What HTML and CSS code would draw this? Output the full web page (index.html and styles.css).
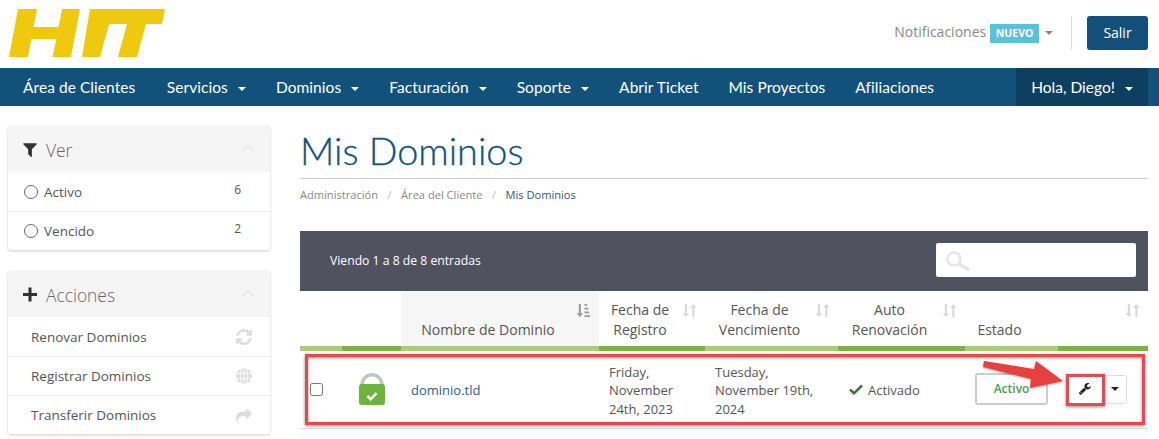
FILE: index.html
```html
<!DOCTYPE html>
<html>
  <head>
    <title>Mis Dominios</title>
    <link rel="stylesheet" href="styles.css">
  </head>
  <body>
    <svg width="0" height="0" class="defs">
      <symbol id="sort" viewBox="0 0 16 16">
        <path d="M3 1h2.200v10H7.600L4.100 15 .6 11H3zM11 15V5H8.600l3.500-4 3.500 4h-2.400v10z" />
      </symbol>
      <symbol id="sort-active" viewBox="0 0 16 16">
        <path d="M3 1h2.200v10H7.600L4.100 15 .6 11H3z" />
        <path d="M9 1h3v2H9zM9 5h4v2H9zM9 9h5v2H9zM9 13h6v2H9z" />
      </symbol>
    </svg>

    <header class="top">
      <svg class="logo" viewBox="0 0 158 48" width="158" height="48">
        <polygon fill="#eec90d" points="9,0 28,0 24.600,18 49.600,18 53,0 71,0 62,48 43.500,48 47.400,30 22.400,30 19,48 0,48" />
        <polygon fill="#eec90d" points="81,0 156,0 153,15 137,15 128,48 109,48 118,15 100,15 91,48 73,48" />
      </svg>
      <div class="top-right">
        <a class="notif">Notificaciones <span class="badge">NUEVO</span> <i class="caret caret-grey"></i></a>
        <a class="logout">Salir</a>
      </div>
    </header>

    <nav class="nav">
      <ul class="nav-list">
        <li>Área de Clientes</li>
        <li>Servicios <i class="caret"></i></li>
        <li>Dominios <i class="caret"></i></li>
        <li>Facturación <i class="caret"></i></li>
        <li>Soporte <i class="caret"></i></li>
        <li>Abrir Ticket</li>
        <li>Mis Proyectos</li>
        <li>Afiliaciones</li>
      </ul>
      <div class="nav-user">Hola, Diego! <i class="caret"></i></div>
    </nav>

    <div class="page">
      <aside class="side">
        <section class="panel">
          <h3 class="panel-head">
            <svg class="head-icon" viewBox="0 0 1408 1536"><path d="M1403 167q17 41-14 70l-493 493v742q0 42-39 59-13 5-25 5-27 0-45-19l-256-256q-19-19-19-45v-486l-493-493q-31-29-14-70 17-39 59-39h1280q42 0 59 39z" /></svg>
            Ver
            <svg class="chev" viewBox="0 0 14 8"><path d="M1 7l6-5.500L13 7" /></svg>
          </h3>
          <div class="panel-row"><i class="radio"></i>Activo<span class="count">6</span></div>
          <div class="panel-row"><i class="radio"></i>Vencido<span class="count">2</span></div>
        </section>
        <section class="panel">
          <h3 class="panel-head">
            <svg class="head-icon" viewBox="0 0 12 12"><path d="M4.700 0h2.600v4.700H12v2.600H7.300V12H4.700V7.300H0V4.700h4.700z" /></svg>
            Acciones
            <svg class="chev" viewBox="0 0 14 8"><path d="M1 7l6-5.500L13 7" /></svg>
          </h3>
          <div class="panel-row link-row">Renovar Dominios
            <svg class="row-icon" viewBox="0 0 1536 1536"><path d="M1511 928q0 5-1 7-64 268-268 434.5t-478 166.5q-146 0-282.5-55t-243.5-157l-129 129q-19 19-45 19t-45-19-19-45v-448q0-26 19-45t45-19h448q26 0 45 19t19 45-19 45l-137 137q71 66 161 102t187 36q134 0 250-65t186-179q11-17 53-117 8-23 30-23h192q13 0 22.5 9.5t9.5 22.5zm25-800v448q0 26-19 45t-45 19h-448q-26 0-45-19t-19-45 19-45l138-138q-148-137-349-137-134 0-250 65t-186 179q-11 17-53 117-8 23-30 23h-199q-13 0-22.5-9.5t-9.5-22.5v-7q65-268 270-434.5t480-166.5q146 0 284 55.5t245 156.5l130-129q19-19 45-19t45 19 19 45z" /></svg>
          </div>
          <div class="panel-row link-row">Registrar Dominios
            <svg class="row-icon" viewBox="0 0 16 16"><circle cx="8" cy="8" r="8" /><path class="globe-lines" d="M0 5.500h16M0 10.500h16M5.500 0c-1.600 5-1.600 11 0 16M10.500 0c1.600 5 1.600 11 0 16M8 0v16" /></svg>
          </div>
          <div class="panel-row link-row">Transferir Dominios
            <svg class="row-icon" viewBox="0 0 1792 1536"><path d="M1792 640q0 26-19 45l-512 512q-19 19-45 19t-45-19-19-45v-256h-224q-98 0-175.5 6t-154 21.5-133 42.5-105.5 69.5-80 101-48.5 138.5-17.5 181q0 55 5 123 0 6 2.5 23.5t2.5 26.5q0 15-8.5 25t-23.5 10q-16 0-28-17-7-9-13-22t-13.5-30-10.5-24q-127-285-127-451 0-199 53-333 162-403 875-403h224v-256q0-26 19-45t45-19 45 19l512 512q19 19 19 45z" /></svg>
          </div>
        </section>
      </aside>

      <main class="main">
        <h1 class="title">Mis Dominios</h1>
        <ol class="crumbs">
          <li>Administración</li>
          <li>Área del Cliente</li>
          <li class="current">Mis Dominios</li>
        </ol>

        <div class="table-box">
          <div class="table-bar">
            <span class="table-info">Viendo 1 a 8 de 8 entradas</span>
            <div class="search">
              <svg class="search-icon" viewBox="0 0 24 21"><circle cx="8" cy="9" r="6.500" /><path class="search-handle" d="M13 14l10 6" /></svg>
            </div>
          </div>
          <table class="domains">
            <colgroup>
              <col class="c1"><col class="c2"><col class="c3"><col class="c4"><col class="c5"><col class="c6"><col class="c7"><col class="c8">
            </colgroup>
            <thead>
              <tr>
                <th></th>
                <th></th>
                <th class="sorted">Nombre de Dominio<svg class="sort"><use href="#sort-active" /></svg></th>
                <th>Fecha de<br>Registro<svg class="sort"><use href="#sort" /></svg></th>
                <th>Fecha de<br>Vencimiento<svg class="sort"><use href="#sort" /></svg></th>
                <th>Auto<br>Renovación<svg class="sort"><use href="#sort" /></svg></th>
                <th>Estado</th>
                <th><svg class="sort"><use href="#sort" /></svg></th>
              </tr>
            </thead>
            <tbody>
              <tr>
                <td class="cell-check"><input type="checkbox" class="check"></td>
                <td class="cell-lock">
                  <svg class="lock" viewBox="0 0 26 32">
                    <path class="shackle" d="M3 14V11.700a10 10 0 0 1 20 0V14" />
                    <rect class="lock-body" x="0" y="11" width="26" height="21" rx="3" />
                    <path class="lock-tick" d="M8.500 23l3.200 3.200 5.800-6" />
                  </svg>
                </td>
                <td><a class="domain">dominio.tld</a></td>
                <td>Friday,<br>November<br>24th, 2023</td>
                <td>Tuesday,<br>November 19th,<br>2024</td>
                <td class="cell-auto">
                  <svg class="tick" viewBox="0 0 14 11"><path d="M1 5.500L5 9.300 13 1.500" /></svg>Activado
                </td>
                <td class="cell-status"><span class="status">Activo</span></td>
                <td class="cell-actions">
                  <div class="btn-group">
                    <span class="btn">
                      <svg class="wrench" viewBox="0 0 1664 1664"><path d="M363 1344q0-26-19-45t-45-19-45 19-19 45 19 45 45 19 45-19 19-45zm644-420l-682 682q-37 37-90 37-52 0-91-37l-106-108q-38-36-38-90 0-53 38-91l681-681q39 98 114.5 173.5t173.5 114.5zm634-435q0 39-23 106-47 134-164.5 217.5t-258.5 83.5q-185 0-316.5-131.5t-131.5-316.5 131.5-316.5 316.5-131.5q58 0 121.5 16.5t107.5 46.5q16 11 16 28t-16 28l-293 169v224l193 107q5-3 79-48.5t135.5-81 70.5-35.5q15 0 23.5 10t8.5 25z" /></svg>
                    </span>
                    <span class="btn btn-caret"><i class="caret caret-dark"></i></span>
                  </div>
                </td>
              </tr>
            </tbody>
          </table>
          <div class="mark-row"></div>
          <div class="mark-btn"></div>
          <svg class="mark-arrow" viewBox="0 0 82 32" width="82" height="32">
            <polygon points="1,2 51,10 53,2 80,22 47,29 48,20 0,8" />
          </svg>
        </div>
      </main>
    </div>
  </body>
</html>
```

FILE: styles.css
```css
html,
body {
  height: 100%;
  overflow: hidden;
}

body {
  margin: 0;
  font-family: "Open Sans", sans-serif;
  font-size: 13px;
  color: #555;
  background: #fff;
}

.defs {
  position: absolute;
}

ul,
ol {
  list-style: none;
  margin: 0;
  padding: 0;
}

/* header */
.top {
  height: 68px;
  display: flex;
  justify-content: space-between;
  box-sizing: border-box;
  padding: 9px 11px 0 9px;
}

.top-right {
  display: flex;
  align-items: flex-start;
  padding-top: 7px;
}

.notif {
  color: #888;
  font-size: 14px;
  line-height: 18px;
  padding: 7px 18px 9px 0;
  margin-right: 15px;
  border-right: 1px solid #ddd;
  height: 18px;
}

.badge {
  display: inline-block;
  background: #5bc0de;
  color: #fff;
  font-size: 10.500px;
  font-weight: 700;
  line-height: 19px;
  padding: 0 6px 0 6px;
  margin-top: 1px;
  vertical-align: top;
}

.logout {
  width: 61px;
  height: 34px;
  line-height: 34px;
  text-align: center;
  color: #fff;
  background: #12507a;
  border-radius: 3px;
  font-size: 14px;
}

.caret {
  display: inline-block;
  width: 0;
  height: 0;
  border-top: 4px solid #fff;
  border-left: 4px solid transparent;
  border-right: 4px solid transparent;
  margin-left: 6px;
  vertical-align: middle;
}

.caret-grey {
  border-top-color: #888;
  margin-left: 2px;
}

.caret-dark {
  border-top-color: #222;
  margin: 0;
}

/* nav */
.nav {
  height: 38px;
  background: #12527a;
  display: flex;
  justify-content: space-between;
  padding: 0 11px 0 23px;
  font-family: "Lato", sans-serif;
  font-size: 15.500px;
  line-height: 38px;
  color: #fff;
}

.nav-list {
  display: flex;
  gap: 30px;
  letter-spacing: 0.06px;
}

.nav-list li:first-child {
  padding-right: 1.500px;
}

.nav-user {
  width: 132px;
  background: #0d3f61;
  text-align: center;
}

/* page */
.page {
  display: flex;
  gap: 30px;
  padding: 20px 11px 0 8px;
}

.side {
  width: 262px;
  flex: none;
}

.panel {
  background: #fff;
  border-radius: 3px;
  box-shadow: 0 1px 3px rgba(0, 0, 0, 0.2);
  margin-bottom: 21px;
}

.panel-head {
  display: flex;
  align-items: center;
  height: 46px;
  margin: 0;
  padding: 1px 15px 0;
  box-sizing: border-box;
  background: #f5f5f5;
  border-radius: 3px 3px 0 0;
  font-size: 17.400px;
  font-weight: 300;
  color: #666;
}

.head-icon {
  width: 14px;
  height: 15px;
  margin-right: 9px;
  fill: #333;
}

.chev {
  width: 14px;
  height: 8px;
  margin-left: auto;
  margin-right: 0;
  margin-top: -3px;
  fill: none;
  stroke: #e8e8e8;
  stroke-width: 2;
}

.panel-row {
  display: flex;
  align-items: center;
  height: 39px;
  box-sizing: border-box;
  padding: 0 15px 0 16px;
  border-top: 1px solid #eee;
  color: #555;
  font-size: 13.500px;
}

.panel-head + .panel-row {
  border-top: 0;
}

.radio {
  width: 12px;
  height: 12px;
  border: 1px solid #666;
  border-radius: 50%;
  margin-right: 6px;
}

.count {
  margin-left: auto;
  margin-right: 14px;
  margin-top: -5px;
  font-size: 12px;
}

.link-row {
  padding: 0 18px 0 23px;
  justify-content: space-between;
}

.row-icon {
  width: 16px;
  height: 16px;
  fill: #ddd;
}

.globe-lines {
  fill: none;
  stroke: #fff;
  stroke-width: 0.8;
}

/* main */
.main {
  flex: 1;
  min-width: 0;
}

.title {
  margin: 0;
  font-family: "Lato", sans-serif;
  font-size: 37.800px;
  font-weight: 300;
  -webkit-text-stroke: 0.3px #12527a;
  line-height: 49px;
  color: #12527a;
  padding-bottom: 3px;
  border-bottom: 1px solid #ccc;
}

.crumbs {
  display: flex;
  height: 52px;
  padding-top: 8px;
  box-sizing: border-box;
  font-size: 11.100px;
  line-height: 15px;
  color: #888;
}

.crumbs li + li::before {
  content: "/";
  color: #bbb;
  padding: 0 9.500px;
}

.crumbs .current {
  color: #34566e;
}

.table-box {
  position: relative;
  height: 220px;
  background: #f9fbfc;
}

.table-bar {
  height: 60px;
  background: #50525f;
  color: #fff;
  font-size: 12.200px;
  display: flex;
  align-items: center;
  justify-content: space-between;
  padding: 0 12px 0 30px;
}

.table-info {
  margin-top: -2px;
}

.search {
  width: 200px;
  height: 34px;
  margin-top: -2px;
  background: #fff;
  border-radius: 2px;
  display: flex;
  align-items: center;
  padding-left: 10px;
  box-sizing: border-box;
}

.search-icon {
  width: 24px;
  height: 21px;
  fill: none;
  stroke: #e6e6e6;
  stroke-width: 2.500;
}

.search-handle {
  stroke-width: 3.500;
}

.domains {
  width: 848px;
  table-layout: fixed;
  border-collapse: collapse;
  background: #fff;
}

.c1 { width: 42px; }
.c2 { width: 59px; }
.c3 { width: 198px; }
.c4 { width: 106px; }
.c5 { width: 133px; }
.c6 { width: 127px; }
.c7 { width: 93px; }
.c8 { width: 90px; }

.domains th {
  position: relative;
  height: 57px;
  box-sizing: border-box;
  padding: 0 24px 6px 0;
  vertical-align: bottom;
  text-align: center;
  font-size: 14px;
  font-weight: 400;
  line-height: 20px;
  color: #555;
  border-bottom: 5px solid #a5cf7e;
}

.domains th:nth-child(even) {
  border-bottom-color: #77b446;
}

.domains th.sorted {
  background: #f6f6f6;
}

.sort {
  position: absolute;
  right: 8px;
  top: 12px;
  width: 15px;
  height: 15px;
  fill: #d8d8d8;
}

.sorted .sort {
  fill: #999;
}

.domains td {
  height: 74px;
  padding: 3px 10px 0;
  font-size: 13px;
  line-height: 18.500px;
  color: #555;
  border-bottom: 1px solid #ddd;
}

.domains td.cell-check {
  padding: 0 0 0 10px;
}

.check {
  margin: 0;
  width: 13px;
  height: 13px;
  display: block;
}

.cell-lock {
  text-align: center;
}

.domains td.cell-lock {
  padding: 0;
}

.lock {
  width: 26px;
  height: 32px;
  display: inline-block;
  vertical-align: middle;
}

.shackle {
  fill: none;
  stroke: #c4c4c4;
  stroke-width: 3.500;
}

.lock-body {
  fill: #6cb33f;
}

.lock-tick {
  fill: none;
  stroke: #fff;
  stroke-width: 2.600;
}

.domain {
  color: #1d6390;
}

.domains td.cell-auto {
  padding-left: 11px;
  padding-top: 2px;
}

.tick {
  width: 14px;
  height: 11px;
  margin-right: 5px;
  fill: none;
  stroke: #3c763d;
  stroke-width: 2.500;
}

.domains td.cell-status,
.domains td.cell-actions {
  padding: 0;
}

.status {
  display: block;
  box-sizing: border-box;
  width: 73px;
  height: 32px;
  line-height: 28px;
  margin-left: 10px;
  text-align: center;
  border: 2px solid #ccc;
  border-radius: 3px;
  color: #4a9d4a;
  font-size: 12px;
  font-weight: 600;
}

.btn-group {
  display: flex;
  margin-left: 9px;
}

.btn {
  width: 36px;
  height: 29px;
  display: flex;
  align-items: center;
  justify-content: center;
  box-sizing: border-box;
  border: 1px solid #ddd;
  border-radius: 3px 0 0 3px;
}

.btn-caret {
  width: 25px;
  margin-left: -1px;
  border-radius: 0 3px 3px 0;
}

.wrench {
  width: 12px;
  height: 12px;
  fill: #222;
}

/* red marks drawn over the screenshot */
.mark-row {
  position: absolute;
  left: 5px;
  top: 123px;
  width: 834px;
  height: 65px;
  border: 3px solid #e54b4b;
  box-shadow: 0 1px 3px rgba(0, 0, 0, 0.45), inset 0 1px 3px rgba(0, 0, 0, 0.45);
}

.mark-btn {
  position: absolute;
  left: 766px;
  top: 143px;
  width: 33px;
  height: 26px;
  border: 3px solid #e54b4b;
  box-shadow: 0 1px 3px rgba(0, 0, 0, 0.45);
}

.mark-arrow {
  position: absolute;
  left: 683px;
  top: 128px;
  fill: #e8403f;
  filter: drop-shadow(0 1px 1px rgba(0, 0, 0, 0.35));
}
```
